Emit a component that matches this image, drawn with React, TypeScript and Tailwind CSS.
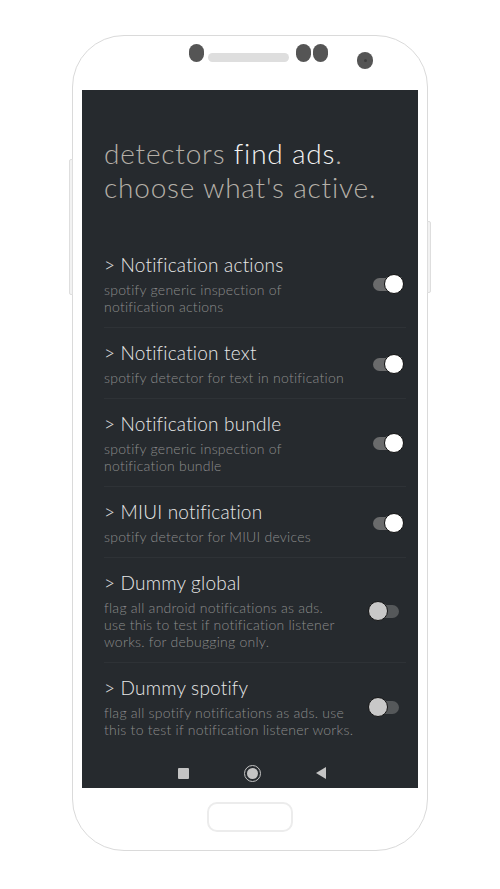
const detectors = [
  { title: "Notification actions", desc: ["spotify generic inspection of", "notification actions"], on: true },
  { title: "Notification text", desc: ["spotify detector for text in notification"], on: true },
  { title: "Notification bundle", desc: ["spotify generic inspection of", "notification bundle"], on: true },
  { title: "MIUI notification", desc: ["spotify detector for MIUI devices"], on: true },
  {
    title: "Dummy global",
    desc: ["flag all android notifications as ads.", "use this to test if notification listener", "works. for debugging only."],
    on: false,
  },
  {
    title: "Dummy spotify",
    desc: ["flag all spotify notifications as ads. use", "this to test if notification listener works."],
    on: false,
  },
];

function Toggle({ on }: { on: boolean }) {
  return (
    <div className="relative w-[36px] h-[20px] mr-[2px] shrink-0">
      <div
        className={
          "absolute left-[5px] top-[4px] w-[26px] h-[13px] rounded-full " +
          (on ? "bg-[#6a6b6c]" : "bg-[#55585a]")
        }
      />
      {on ? (
        <div className="absolute right-0 top-0 w-[20px] h-[20px] rounded-full bg-white border border-[#111]" />
      ) : (
        <div className="absolute left-0 top-0 w-[20px] h-[20px] rounded-full bg-[#c8c8c8] border border-[#151515]" />
      )}
    </div>
  );
}

export default function App() {
  return (
    <div className="w-[500px] h-[889px] bg-white flex justify-center pt-[35px] font-['Lato','Open_Sans',sans-serif]">
      <div className="relative w-[356px] h-[816px] rounded-[52px] border border-[#dadada] bg-white flex flex-col items-center">
        {/* side buttons */}
        <div className="absolute left-[-4px] top-[123px] w-[4px] h-[136px] rounded-l-[2px] border border-[#dedede] bg-[#f2f2f2]" />
        <div className="absolute right-[-4px] top-[185px] w-[4px] h-[72px] rounded-r-[2px] border border-[#dedede] bg-[#f2f2f2]" />

        {/* top: sensors, speaker, camera */}
        <div className="h-[54px] w-full flex items-start pl-[116px]">
          <div className="mt-[8px] w-[15px] h-[18px] rounded-full bg-[#555]" />
          <div className="mt-[17px] ml-[4px] w-[81px] h-[9px] rounded-full bg-[#dedede]" />
          <div className="mt-[8px] ml-[7px] w-[15px] h-[18px] rounded-full bg-[#555]" />
          <div className="mt-[8px] ml-[2px] w-[15px] h-[18px] rounded-full bg-[#555]" />
          <div className="mt-[16px] ml-[29px] w-[16px] h-[17px] rounded-full bg-[#555] flex items-center justify-center">
            <div className="w-[3px] h-[3px] rounded-full bg-[#3f3f3f]" />
          </div>
        </div>

        {/* screen */}
        <div className="w-[336px] h-[698px] bg-[#262a2e] flex flex-col">
          <h1 className="mt-[46px] px-[22px] text-[28px] leading-[34px] font-light tracking-[0.8px] text-[#b5b0a8]">
            detectors <span className="text-[#f3f3f3]">find ads</span>.
            <br />
            choose what's active.
          </h1>

          <div className="mt-[36px] pl-[22px] pr-[12px]">
            {detectors.map((d, i) => (
              <div
                key={d.title}
                className={
                  "flex items-center justify-between pt-[13px] pb-[12px] " +
                  (i < detectors.length - 1 ? "border-b border-[#2e3236]" : "")
                }
              >
                <div>
                  <div className="text-[19px] leading-[24px] font-light tracking-[0.2px] text-[#e8e8e8]">
                    &gt; {d.title}
                  </div>
                  <div className="mt-[4px] text-[14px] leading-[17px] font-light tracking-[0.25px] text-[#8c8c8c]">
                    {d.desc.map((line) => (
                      <div key={line}>{line}</div>
                    ))}
                  </div>
                </div>
                <Toggle on={d.on} />
              </div>
            ))}
          </div>

          {/* nav bar */}
          <div className="mt-auto h-[30px] flex items-center justify-center gap-[55px] pl-[4px]">
            <div className="w-[11px] h-[11px] bg-[#c4c4c4] rounded-[1px]" />
            <div className="w-[17px] h-[17px] rounded-full border-[1.5px] border-[#c4c4c4] flex items-center justify-center">
              <div className="w-[11px] h-[11px] rounded-full bg-[#c4c4c4]" />
            </div>
            <svg width="10" height="12" viewBox="0 0 10 12">
              <path d="M10 0 L10 12 L0 6 Z" fill="#c4c4c4" />
            </svg>
          </div>
        </div>

        {/* home button */}
        <div className="mt-[14px] w-[86px] h-[30px] rounded-[10px] border-2 border-[#ececec]" />
      </div>
    </div>
  );
}
